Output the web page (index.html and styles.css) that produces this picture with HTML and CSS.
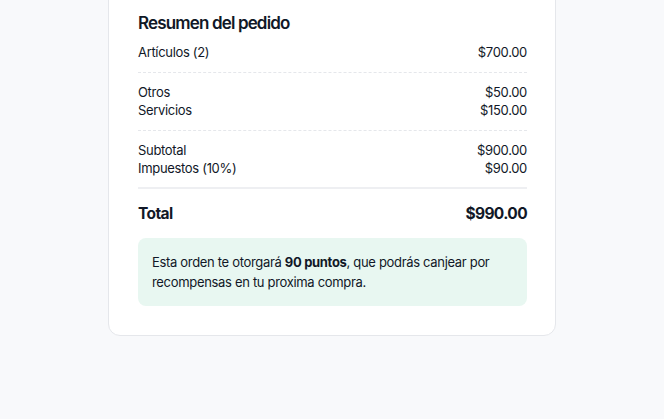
FILE: index.html
```html
<!DOCTYPE html>
<html lang="es">
<head>
<meta charset="utf-8">
<title>Resumen del pedido</title>
<link rel="stylesheet" href="styles.css">
</head>
<body>
<main class="page">
  <section class="card">
    <h2 class="title">Resumen del pedido</h2>
    <div class="group">
      <div class="row"><span>Artículos (2)</span><span>$700.00</span></div>
    </div>
    <hr class="sep dashed">
    <div class="group">
      <div class="row"><span>Otros</span><span>$50.00</span></div>
      <div class="row"><span>Servicios</span><span>$150.00</span></div>
    </div>
    <hr class="sep dashed">
    <div class="group">
      <div class="row"><span>Subtotal</span><span>$900.00</span></div>
      <div class="row"><span>Impuestos (10%)</span><span>$90.00</span></div>
    </div>
    <hr class="sep solid">
    <div class="row total"><span>Total</span><span>$990.00</span></div>
    <p class="points">Esta orden te otorgará <strong>90 puntos</strong>, que podrás canjear por recompensas en tu proxima compra.</p>
  </section>
</main>
</body>
</html>
```
FILE: styles.css
```css
* { box-sizing: border-box; }
html, body { margin: 0; padding: 0; }
body {
  background: #f8f9fb;
  font-family: Inter, "Noto Sans", sans-serif;
  color: #111827;
  letter-spacing: -0.02em;
  min-height: 100vh;
}
.page {
  display: flex;
  justify-content: center;
}
.card {
  width: 448px;
  margin-top: -20px;
  background: #fff;
  border: 1px solid #e5e7eb;
  border-radius: 12px;
  padding: 28px 28px 29px 29px;
}
.title {
  margin: 0 0 6px;
  font-size: 17px;
  line-height: 28px;
  font-weight: 600;
  letter-spacing: -0.05em;
}
.row {
  display: flex;
  justify-content: space-between;
  font-size: 13px;
  line-height: 18px;
}
.sep {
  border: 0;
  margin: 11px 0 10px;
  height: 0;
}
.sep.dashed { border-top: 1px dashed #e5e7eb; }
.sep.solid { border-top: 2px solid #eeeff2; margin: 10px 0 13px; }
.row.total {
  font-size: 15.5px;
  line-height: 24px;
  font-weight: 700;
  letter-spacing: -0.04em;
}
.points {
  margin: 12px 0 0;
  background: #e8f7f1;
  border-radius: 8px;
  padding: 14px;
  font-size: 13px;
  line-height: 20px;
}
.points strong { font-weight: 700; }
```
